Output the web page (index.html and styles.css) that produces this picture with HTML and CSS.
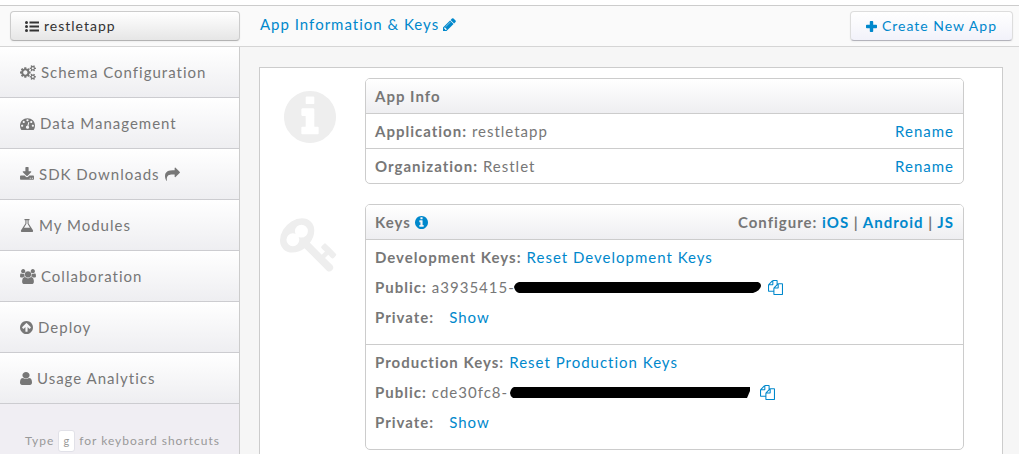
FILE: index.html
```html
<!DOCTYPE html>
<html lang="en">
<head>
<meta charset="utf-8">
<meta name="viewport" content="width=device-width, initial-scale=1">
<title>App Information &amp; Keys</title>
<link rel="stylesheet" href="styles.css">
</head>
<body>
<svg class="sprite" aria-hidden="true">
  <symbol id="info" viewBox="128 128 1536 1536"><path d="M1152 1376v-160q0-14-9-23t-23-9h-96v-512q0-14-9-23t-23-9h-320q-14 0-23 9t-9 23v160q0 14 9 23t23 9h96v320h-96q-14 0-23 9t-9 23v160q0 14 9 23t23 9h448q14 0 23-9t9-23zm-128-896v-160q0-14-9-23t-23-9h-192q-14 0-23 9t-9 23v160q0 14 9 23t23 9h192q14 0 23-9t9-23zm640 416q0 209-103 385.5t-279.5 279.5-385.5 103-385.5-103-279.5-279.5-103-385.5 103-385.5 279.5-279.5 385.5-103 385.5 103 279.5 279.5 103 385.5z"/></symbol>
  <symbol id="copy" viewBox="0 0 1792 1792"><path d="M1696 384q40 0 68 28t28 68v1216q0 40-28 68t-68 28h-960q-40 0-68-28t-28-68v-288h-544q-40 0-68-28t-28-68v-672q0-40 20-88t48-76l408-408q28-28 76-48t88-20h416q40 0 68 28t28 68v328q68-40 128-40h416zm-544 213l-299 299h299v-299zm-640-384l-299 299h299v-299zm196 647l316-316v-416h-384v416q0 40-28 68t-68 28h-416v640h512v-256q0-40 20-88t48-76zm956 804v-1152h-384v416q0 40-28 68t-68 28h-416v640h896z"/></symbol>
</svg>

<header class="topbar">
  <div class="topbar-app">
    <button class="btn btn-app" type="button">
      <svg class="icon icon-list" viewBox="0 0 14 11" aria-hidden="true"><circle cx="1.5" cy="1.5" r="1.5"/><circle cx="1.5" cy="5.5" r="1.5"/><circle cx="1.5" cy="9.5" r="1.5"/><path d="M4.500.5H14v2H4.500zM4.500 4.500H14v2H4.500zM4.500 8.500H14v2H4.500z"/></svg>
      restletapp
    </button>
  </div>
  <a class="title" href="#">App Information &amp; Keys
    <svg class="icon icon-13" viewBox="128 128 1536 1536" aria-hidden="true"><path d="M491 1536l91-91-235-235-91 91v107h128v128h107zm523-928q0-22-22-22-10 0-17 7l-542 542q-7 7-7 17 0 22 22 22 10 0 17-7l542-542q7-7 7-17zm-54-192l416 416-832 832h-416v-416zm683 96q0 53-37 90l-166 166-416-416 166-165q36-38 90-38 53 0 91 38l235 234q37 39 37 91z"/></svg>
  </a>
  <button class="btn btn-create" type="button">
    <svg class="icon icon-plus" viewBox="0 0 11 11" aria-hidden="true"><path d="M4.6 0h1.8q.8 0 .8.8v3h3q.8 0 .8.8v1.8q0 .8-.8.8h-3v3q0 .8-.8.8H4.600q-.8 0-.8-.8v-3h-3Q0 7.200 0 6.400V4.600q0-.8.8-.8h3v-3q0-.8.800-.8z"/></svg>
    Create New App
  </button>
</header>

<div class="body">
  <aside class="sidebar">
    <nav class="menu">
      <a class="menu-item" href="#"><svg class="icon icon-16" viewBox="0 0 1920 1792" aria-hidden="true"><path d="M896 896q0-106-75-181t-181-75-181 75-75 181 75 181 181 75 181-75 75-181zm768 512q0-52-38-90t-90-38-90 38-38 90q0 53 37.500 90.500t90.500 37.500 90.500-37.500 37.500-90.500zm0-1024q0-52-38-90t-90-38-90 38-38 90q0 53 37.500 90.500t90.500 37.500 90.500-37.500 37.500-90.500zm-384 421v185q0 10-7 19.500t-16 10.500l-155 24q-11 35-32 76 34 48 90 115 7 11 7 20 0 12-7 19-23 30-82.500 89.500t-78.500 59.500q-11 0-21-7l-115-90q-37 19-77 31-11 108-23 155-7 24-30 24h-186q-11 0-20-7.500t-10-17.500l-23-153q-34-10-75-31l-118 89q-7 7-20 7-11 0-21-8-144-133-144-160 0-9 7-19 10-14 41-53t47-61q-23-44-35-82l-152-24q-10-1-17-9.500t-7-19.500v-185q0-10 7-19.500t16-10.500l155-24q11-35 32-76-34-48-90-115-7-11-7-20 0-12 7-20 22-30 82-89t79-59q11 0 21 7l115 90q34-18 77-32 11-108 23-154 7-24 30-24h186q11 0 20 7.500t10 17.500l23 153q34 10 75 31l118-89q8-7 20-7 11 0 21 8 144 133 144 160 0 8-7 19-12 16-42 54t-45 60q23 48 34 82l152 23q10 2 17 10.500t7 19.500zm640 533v140q0 16-149 31-12 27-30 52 51 113 51 138 0 4-4 7-122 71-124 71-8 0-46-47t-52-68q-20 2-30 2t-30-2q-14 21-52 68t-46 47q-2 0-124-71-4-3-4-7 0-25 51-138-18-25-30-52-149-15-149-31v-140q0-16 149-31 13-29 30-52-51-113-51-138 0-4 4-7 4-2 35-20t59-34 30-16q8 0 46 46.500t52 67.500q20-2 30-2t30 2q51-71 92-112l6-2q4 0 124 70 4 3 4 7 0 25-51 138 17 23 30 52 149 15 149 31zm0-1024v140q0 16-149 31-12 27-30 52 51 113 51 138 0 4-4 7-122 71-124 71-8 0-46-47t-52-68q-20 2-30 2t-30-2q-14 21-52 68t-46 47q-2 0-124-71-4-3-4-7 0-25 51-138-18-25-30-52-149-15-149-31v-140q0-16 149-31 13-29 30-52-51-113-51-138 0-4 4-7 4-2 35-20t59-34 30-16q8 0 46 46.500t52 67.500q20-2 30-2t30 2q51-71 92-112l6-2q4 0 124 70 4 3 4 7 0 25-51 138 17 23 30 52 149 15 149 31z"/></svg>Schema Configuration</a>
      <a class="menu-item" href="#"><svg class="icon icon-15" viewBox="0 0 1792 1792" aria-hidden="true"><path d="M384 1152q0-53-37.500-90.500t-90.500-37.500-90.500 37.500-37.500 90.500 37.500 90.500 90.500 37.500 90.500-37.500 37.500-90.500zm192-448q0-53-37.500-90.500t-90.500-37.500-90.500 37.500-37.500 90.500 37.500 90.500 90.500 37.500 90.500-37.500 37.500-90.500zm428 481l101-382q6-26-7.500-48.500t-38.500-29.500-48 6.500-30 39.500l-101 382q-60 5-107 43.500t-63 98.500q-20 77 20 146t117 89 146-20 89-117q16-60-6-117t-72-91zm660-33q0-53-37.500-90.500t-90.500-37.500-90.500 37.500-37.500 90.500 37.500 90.500 90.500 37.500 90.500-37.500 37.500-90.500zm-640-640q0-53-37.500-90.500t-90.500-37.500-90.500 37.500-37.500 90.500 37.500 90.500 90.500 37.500 90.500-37.500 37.500-90.500zm448 192q0-53-37.500-90.500t-90.500-37.500-90.500 37.500-37.500 90.500 37.500 90.500 90.500 37.500 90.500-37.500 37.500-90.500zm320 448q0 261-141 483-19 29-54 29h-1402q-35 0-54-29-141-221-141-483 0-182 71-348t191-286 286-191 348-71 348 71 286 191 191 286 71 348z"/></svg>Data Management</a>
      <a class="menu-item" href="#"><svg class="icon icon-14" viewBox="64 0 1664 1792" aria-hidden="true"><path d="M1344 1344q0-26-19-45t-45-19-45 19-19 45 19 45 45 19 45-19 19-45zm256 0q0-26-19-45t-45-19-45 19-19 45 19 45 45 19 45-19 19-45zm128-224v320q0 40-28 68t-68 28h-1472q-40 0-68-28t-28-68v-320q0-40 28-68t68-28h465l135 136q58 56 136 56t136-56l136-136h464q40 0 68 28t28 68zm-325-569q17 41-14 70l-448 448q-18 19-45 19t-45-19l-448-448q-31-29-14-70 17-39 59-39h256v-448q0-26 19-45t45-19h256q26 0 45 19t19 45v448h256q42 0 59 39z"/></svg>SDK Downloads<svg class="icon icon-15" viewBox="0 0 1792 1792" aria-hidden="true"><path d="M1792 640q0 26-19 45l-512 512q-19 19-45 19t-45-19-19-45v-256h-224q-98 0-175.500 6t-154 21.500-133 42.500-105.500 69.500-80 101-48.500 138.500-17.500 181q0 55 5 123 0 6 2.500 23.500t2.500 26.500q0 15-8.500 25t-23.500 10q-16 0-28-17-7-9-13-22t-13.500-30-10.500-24q-127-285-127-451 0-199 53-333 162-403 875-403h224v-256q0-26 19-45t45-19 45 19l512 512q19 19 19 45z"/></svg></a>
      <a class="menu-item" href="#"><svg class="icon icon-14" viewBox="64 0 1664 1792" aria-hidden="true"><path d="M1591 1448q56 89 21.500 152.500t-140.500 63.500h-1152q-106 0-140.500-63.500t21.500-152.500l503-793v-399h-64q-26 0-45-19t-19-45 19-45 45-19h512q26 0 45 19t19 45-19 45-45 19h-64v399zm-779-725l-272 429h712l-272-429-20-31v-436h-128v436z"/></svg>My Modules</a>
      <a class="menu-item" href="#"><svg class="icon icon-16" viewBox="-64 0 1920 1792" aria-hidden="true"><path d="M529 896q-162 5-265 128h-134q-82 0-138-40.500t-56-118.500q0-353 124-353 6 0 43.500 21t97.500 42.500 119 21.500q67 0 133-23-5 37-5 66 0 139 81 256zm1071 637q0 120-73 189.500t-194 69.500h-874q-121 0-194-69.500t-73-189.500q0-53 3.500-103.500t14-109 26.500-108.500 43-97.500 62-81 85.500-53.500 111.500-20q10 0 43 21.500t73 48 107 48 135 21.500 135-21.500 107-48 73-48 43-21.500q61 0 111.500 20t85.500 53.500 62 81 43 97.500 26.500 108.500 14 109 3.500 103.500zm-1024-1277q0 106-75 181t-181 75-181-75-75-181 75-181 181-75 181 75 75 181zm704 384q0 159-112.500 271.500t-271.500 112.500-271.500-112.500-112.500-271.500 112.500-271.500 271.500-112.500 271.500 112.500 112.500 271.500zm576 225q0 78-56 118.500t-138 40.500h-134q-103-123-265-128 81-117 81-256 0-29-5-66 66 23 133 23 59 0 119-21.500t97.500-42.500 43.500-21q124 0 124 353zm-128-609q0 106-75 181t-181 75-181-75-75-181 75-181 181-75 181 75 75 181z"/></svg>Collaboration</a>
      <a class="menu-item" href="#"><svg class="icon icon-13" viewBox="128 128 1536 1536" aria-hidden="true"><path d="M1412 895q0-27-18-45l-362-362-91-91q-18-18-45-18t-45 18l-91 91-362 362q-18 18-18 45t18 45l91 91q18 18 45 18t45-18l189-189v502q0 26 19 45t45 19h128q26 0 45-19t19-45v-502l189 189q19 19 45 19t45-19l91-91q18-18 18-45zm252 1q0 209-103 385.500t-279.500 279.500-385.500 103-385.500-103-279.500-279.500-103-385.500 103-385.500 279.500-279.500 385.500-103 385.500 103 279.500 279.500 103 385.500z"/></svg>Deploy</a>
      <a class="menu-item" href="#"><svg class="icon icon-user" viewBox="256 128 1280 1536" preserveAspectRatio="none" aria-hidden="true"><path d="M1536 1399q0 109-62.500 187t-150.500 78h-854q-88 0-150.500-78t-62.500-187q0-85 8.500-160.500t31.500-152 58.500-131 94-89 134.500-34.500q131 128 313 128t313-128q76 0 134.500 34.500t94 89 58.500 131 31.500 152 8.500 160.500zm-256-887q0 159-112.500 271.500t-271.500 112.500-271.500-112.500-112.500-271.500 112.500-271.500 271.500-112.500 271.500 112.500 112.500 271.500z"/></svg>Usage Analytics</a>
    </nav>
    <p class="hint">Type <kbd>g</kbd> for keyboard shortcuts</p>
  </aside>

  <main class="main">
    <div class="panel">
      <section class="block">
        <svg class="block-icon block-icon-info" aria-hidden="true"><use href="#info"/></svg>
        <div class="card">
          <h2 class="card-head">App Info</h2>
          <div class="row"><span><b>Application:</b> restletapp</span><a href="#">Rename</a></div>
          <div class="row"><span><b>Organization:</b> Restlet</span><a href="#">Rename</a></div>
        </div>
      </section>
      <section class="block">
        <svg class="block-icon" viewBox="0 0 1792 1792" aria-hidden="true"><path d="M832 512q0-80-56-136t-136-56-136 56-56 136q0 42 19 83-41-19-83-19-80 0-136 56t-56 136 56 136 136 56 136-56 56-136q0-42-19-83 41 19 83 19 80 0 136-56t56-136zm851 704q0 17-49 66t-66 49q-9 0-28.500-16t-36.500-33-38.500-40-24.500-26l-96 96 220 220q28 28 28 68 0 42-39 81t-81 39q-40 0-68-28l-671-671q-176 131-365 131-163 0-265.500-102.500t-102.500-265.500q0-160 95-313t248-248 313-95q163 0 265.500 102.500t102.500 265.500q0 189-131 365l355 355 96-96q-3-3-26-24.500t-40-38.500-33-36.500-16-28.500q0-17 49-66t66-49q13 0 23 10 6 6 46 44.500t82 79.500 86.500 86 73 78 28.500 41z"/></svg>
        <div class="card">
          <div class="card-head">
            <h2 class="card-title">Keys <a href="#" aria-label="About keys"><svg class="icon icon-13"><use href="#info"/></svg></a></h2>
            <span>Configure: <a href="#">iOS</a> | <a href="#">Android</a> | <a href="#">JS</a></span>
          </div>
          <div class="keys">
            <div class="line"><b>Development Keys:</b> <a href="#">Reset Development Keys</a></div>
            <div class="line"><b>Public:</b> a3935415-<svg class="redacted redacted-dev" viewBox="0 0 247 11" preserveAspectRatio="none" role="img" aria-label="Hidden key"><path d="M5 0H244Q247 1 247 4Q246 9 239 11H5Q1 10 0 5Q1 1 5 0z"/></svg><a class="copy" href="#" aria-label="Copy development key"><svg class="icon icon-15"><use href="#copy"/></svg></a></div>
            <div class="line"><b class="private">Private:</b><a href="#">Show</a></div>
          </div>
          <div class="keys">
            <div class="line"><b>Production Keys:</b> <a href="#">Reset Production Keys</a></div>
            <div class="line"><b>Public:</b> cde30fc8-<svg class="redacted redacted-prod" viewBox="0 0 240 11" preserveAspectRatio="none" role="img" aria-label="Hidden key"><path d="M4 0H240V4L237 11H3Q0 9 0 6Q1 1 4 0z"/></svg><a class="copy" href="#" aria-label="Copy production key"><svg class="icon icon-15"><use href="#copy"/></svg></a></div>
            <div class="line"><b class="private">Private:</b><a href="#">Show</a></div>
          </div>
        </div>
      </section>
    </div>
  </main>
</div>
</body>
</html>
```

FILE: styles.css
```css
* {
  box-sizing: border-box;
}

body {
  display: flex;
  flex-direction: column;
  min-height: 100vh;
  margin: 0;
  padding-top: 5px;
  background: #fff;
  color: #777;
  font-family: Lato, "Open Sans", sans-serif;
  font-size: 15px;
  line-height: 20px;
  letter-spacing: 1px;
}

a {
  color: #0088cc;
  text-decoration: none;
}

.sprite {
  display: none;
}

.icon {
  flex: none;
  fill: currentColor;
}

.icon-13 { width: 13px; height: 13px; }
.icon-14 { width: 14px; height: 15px; }
.icon-15 { width: 15px; height: 15px; }
.icon-16 { width: 16px; height: 15px; }
.icon-user { width: 12px; height: 13px; }
.icon-list { width: 14px; height: 11px; }
.icon-plus { width: 11px; height: 11px; }

.topbar {
  display: flex;
  align-items: center;
  height: 42px;
  padding-right: 6px;
  border-top: 1px solid #ccc;
  border-bottom: 1px solid #d5d5d5;
  background: #fafafa;
}

.topbar-app {
  flex: none;
  width: 240px;
  padding-left: 10px;
}

.btn {
  display: flex;
  align-items: center;
  gap: 5px;
  height: 30px;
  padding: 0 14px;
  border: 1px solid #ccc;
  border-bottom-color: #b3b3b3;
  border-radius: 4px;
  font: inherit;
  font-size: 14px;
  letter-spacing: inherit;
  box-shadow: 0 1px 2px rgba(0, 0, 0, 0.05);
}

.btn-app {
  width: 100%;
  background: linear-gradient(#fff, #e6e6e6);
  color: #333;
}

.btn-create {
  margin-left: auto;
  padding: 0 15px;
  border-color: #ddd #ddd #b3b3bb;
  background: linear-gradient(#fff, #f2f2fa);
  color: #0088cc;
}

.title {
  display: flex;
  align-items: center;
  gap: 4px;
  padding: 0 20px 4px;
}

.body {
  display: flex;
  flex: 1;
}

.sidebar {
  flex: none;
  width: 240px;
  border-right: 1px solid #ccc;
  background: #f0eef3;
}

.menu-item {
  display: flex;
  align-items: center;
  gap: 5px;
  height: 51px;
  padding-left: 20px;
  border-bottom: 1px solid #ccccd0;
  background: linear-gradient(#fff, #eeeef1);
  color: #777;
}

.hint {
  margin: 26px 0 0 25px;
  color: #999;
  font-size: 12px;
}

.hint kbd {
  display: inline-block;
  padding: 0 4px;
  border: 1px solid #e1e1e8;
  border-radius: 3px;
  background: #fff;
  font-family: inherit;
  font-size: 11px;
}

.main {
  display: flex;
  flex: 1;
  padding: 20px 16px 0 19px;
  background: #f6f6f6;
}

.panel {
  flex: 1;
  padding: 10px 38px 0 20px;
  border: 1px solid #ccc;
  border-bottom: 0;
  background: #fff;
}

.block {
  display: flex;
  gap: 25px;
  margin-bottom: 20px;
}

.block-icon {
  flex: none;
  width: 60px;
  height: 60px;
  margin-top: 10px;
  fill: #eee;
}

.block-icon-info {
  margin-top: 9px;
  padding: 4px;
}

.card {
  flex: 1;
  border: 1px solid #ccc;
  border-radius: 5px;
  overflow: hidden;
}

.card-head,
.row {
  display: flex;
  align-items: center;
  justify-content: space-between;
  height: 35px;
  padding: 0 9px;
}

.card-head {
  margin: 0;
  border-bottom: 1px solid #ccc;
  background: linear-gradient(#fff, #eeeef1);
  font-size: 15px;
  font-weight: 700;
}

.card-title {
  display: flex;
  align-items: center;
  gap: 4px;
  margin: 0;
  font-size: 15px;
}

.card-title a {
  display: flex;
}

.row {
  border-bottom: 1px solid #ccc;
}

.row:last-child {
  height: 34px;
  border-bottom: 0;
}

.keys + .keys {
  border-top: 1px solid #ccc;
}

.keys {
  padding: 2px 9px 12px;
}

.line {
  display: flex;
  align-items: center;
  gap: 5px;
  height: 30px;
}

.private {
  margin-right: 10px;
}

.redacted {
  flex: none;
  height: 11px;
}

.redacted-dev {
  width: 247px;
  margin-left: -6px;
}

.redacted-prod {
  width: 240px;
  margin: 0 3px 0 -3px;
}

.copy {
  display: flex;
  margin-left: 2px;
}
```
